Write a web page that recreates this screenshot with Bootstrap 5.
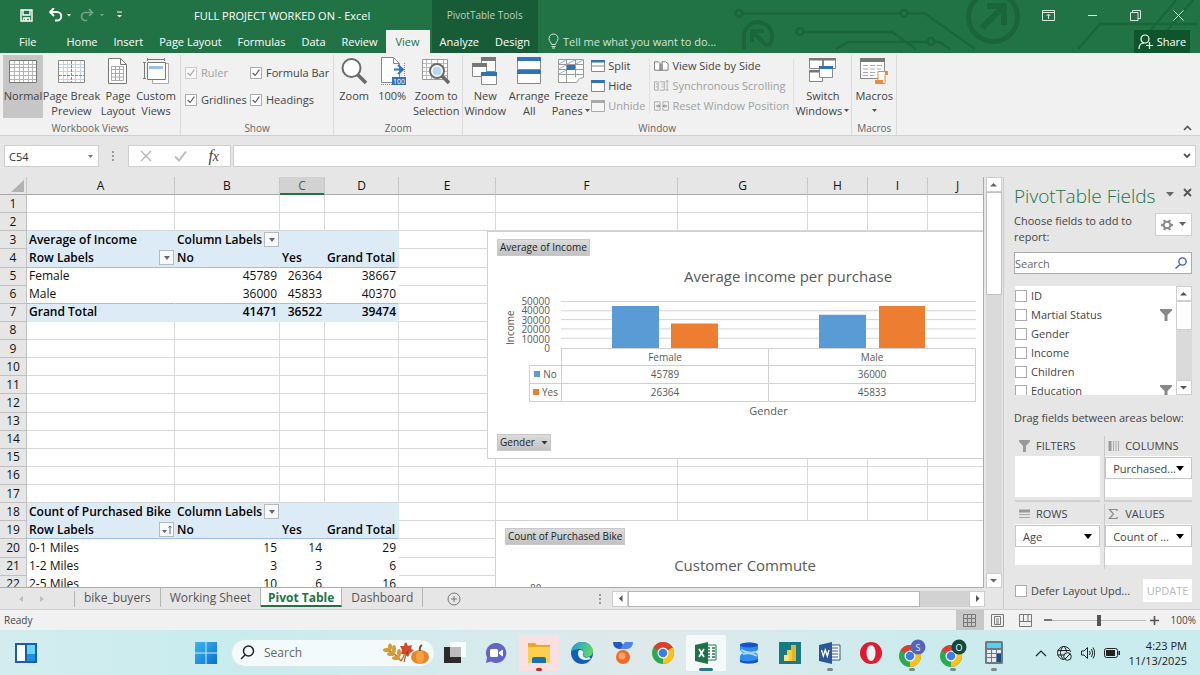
<!DOCTYPE html>
<html lang="en">
<head>
<meta charset="utf-8">
<meta name="viewport" content="width=device-width, initial-scale=1">
<title>FULL PROJECT WORKED ON - Excel</title>
<link href="https://cdn.jsdelivr.net/npm/bootstrap@5.3.0/dist/css/bootstrap.min.css" rel="stylesheet">
<style>
:root{--green:#217346;--dark:#185c37;--ink:#444;--line:#d4d4d4;--ui:"Open Sans","Noto Sans",sans-serif;--cell:"Open Sans","Noto Sans",sans-serif}
body{font-family:var(--ui);font-size:11px;line-height:15px;color:var(--ink);background:#e6e6e6;overflow:hidden}
button{font:inherit;color:inherit;background:none;border:0;padding:0}
input{font:inherit;color:inherit}
svg{display:block;flex:none}
/* title bar */
.titlebar{background:var(--green);color:#fff;height:53px}
.circuit{right:0;top:0}
.toprow{height:30px}
.filename{margin-left:71px}
.tab{display:block;padding:4px 8px 0;height:23px;color:#fff;text-decoration:none;white-space:nowrap}
.tab-file{padding:4px 22px 0 19px}
.tab.on{background:#f1f1f1;color:var(--green);padding:4px 10px 0}
.context{background:var(--dark);margin-left:2px}
.context .toprow{color:#b9d3c4;font-size:10px}
.tell{color:#d0e3d8;padding-left:10px}
.winctl{gap:32px;padding:0 16px}
.share{background:#0f552c;width:56px;height:23px;margin-right:10px}
/* ribbon */
.ribbon{background:#f1f1f1;height:83px;border-bottom:1px solid #d2d2d2}
.group{border-right:1px solid #dadada;margin:2px 0 0;display:flex;flex-direction:column}
.group-name{font-size:10px;line-height:14px;color:#666;text-align:center;margin-top:auto}
.big{width:40px;height:63px;white-space:nowrap;display:flex;flex-direction:column;align-items:center;padding-top:2px}
.big svg{margin-bottom:3px}
.big.on{background:#c6c6c6}
.big .caret{display:inline-block;margin:0 0 2px 2px}
.w-s{width:36px}.w-m{width:44px}.w-l{width:57px}
.views{padding:0 4px 0 3px}
.tick{appearance:none;width:12px;height:12px;border:1px solid #ababab;background:#fff;margin:0}
.tick:checked{background:#fff url("data:image/svg+xml,%3Csvg xmlns='http://www.w3.org/2000/svg' viewBox='0 0 12 12'%3E%3Cpath d='M2 6l3 3 5-7' fill='none' stroke='%23555' stroke-width='1.3'/%3E%3C/svg%3E") center/10px no-repeat}
.tick:disabled{opacity:.5}
.off{color:#a0a0a0}
.checks{display:grid;grid-template-columns:65px auto;row-gap:12px;padding:10px 4px 0}
.checks label{gap:4px;white-space:nowrap}
.smallcmds{display:flex;flex-direction:column;gap:5px;padding-top:3px}
.smallcmds button{display:flex;align-items:center;gap:3px;white-space:nowrap}
.midline{width:1px;background:#e0e0e0;margin:4px 4px}
/* formula bar */
.fbar{height:41px;padding:9px 4px 10px}
.box{background:#fff;border:1px solid #cfcfcf}
.namebox{width:95px}
.namebox input{width:76px;border:0;background:none;padding:0 4px;color:#333}
.fbuttons{width:103px}
.fx{font-family:"Liberation Serif",serif;font-style:italic;font-size:16px}
.fentry{margin-left:2px}
/* grid */
.work{flex:1;min-height:0}
.sheetwrap{min-width:0}
.sheetrow{min-height:0}
.sheet{flex:1;min-height:0;background:#fff;border-right:1px solid #ababab;border-bottom:1px solid #ababab}
.cells{table-layout:fixed;width:988px;height:417px;border-collapse:separate;border-spacing:0;font-family:var(--cell);font-size:12px;line-height:16px;color:#111}
.cells th,.cells td{padding:0 2px;border-right:1px solid #d9d9d9;border-bottom:1px solid #d9d9d9;white-space:nowrap;height:18px}
.cells thead th{background:#e6e6e6;border-color:#c6c6c6;border-bottom-color:#a8a8a8;text-align:center;font-weight:400;padding-top:1px}
.cells thead th.sel{background:#d2d2d2;color:var(--green);box-shadow:inset 0 -1px var(--green);border-bottom-color:var(--green)}
.cells tbody th{background:#e6e6e6;border-color:#c0c0c0;text-align:center;font-weight:400}
.cells td.pv{border-color:transparent}
.cells td.hd{background:#ddebf7;border-color:#ddebf7;font-weight:600;color:#000}
.cells td.ln{border-bottom-color:#9bc2e6}
.cells td.num{text-align:right}
.cells td.menu{padding-right:0}
.menu div{display:flex;justify-content:space-between;align-items:center;height:16px}
.drop{width:15px;height:15px;background:#f8f9fb;border:1px solid #b5b9c2;display:flex;align-items:center;justify-content:center}
.chart{background:#fff;border:1px solid #d0d0d0;font-family:var(--cell);color:#595959}
.chart-a{left:487px;top:54px;width:602px;height:228px}
.chart-b{left:495px;top:343px;width:500px;height:120px}
.fieldbtn{display:block;background:linear-gradient(#dcdcdc,#c2c2c2);border:1px solid #c8c8c8;color:#222;font-size:10px;line-height:15px;padding:0 2px;margin:7px 0 0 9px}
.chart h2{font-size:15px;line-height:20px;font-weight:400;margin:10px 0 0;text-align:center}
.plotarea{width:473px;margin:11px 0 0 15px}
.plot{height:51px}
.ytitle{writing-mode:vertical-rl;transform:rotate(180deg);font-size:10px;line-height:14px;width:14px;height:48px}
.ticks{width:33px;height:56px;font-size:10px;line-height:9px;text-align:right}
.bars{flex:1;height:47px;margin-left:11px}
.dtable{margin-left:26px;width:447px;border-collapse:collapse;font-size:10px;line-height:15px;text-align:center;table-layout:fixed}
.dtable td,.dtable th{border:1px solid #d0d0d0;padding:0;height:18px;font-weight:400}
.dtable thead td{border-width:0 1px 0 0}
.dtable thead th,.dtable thead td{height:17px}
.xtitle{padding-left:58px;line-height:18px;text-align:center}
.gbtn{margin-top:14px}
.ytop{font-size:10px;line-height:13px;padding:7px 0 0 34px}
.sq{display:inline-block;width:6px;height:6px;margin-right:3px;vertical-align:1px}
.sq-no{background:#5b9bd5}.sq-yes{background:#ed7d31}
/* scroll bars */
.vbar{width:16px;background:#dadada;margin:0 1px 0 2px}
.sbtn{background:#fff;border:1px solid #cdcdcd;display:flex;align-items:center;justify-content:center}
.vbar .sbtn{height:15px}
.vthumb{height:103px;background:#fff;border:1px solid #c0c0c0}
.fthumb{height:29px}
.tabs{height:21px;background:#e6e6e6;font-size:12px;color:#555}
.stab{padding:0 9px;height:19px;line-height:19px;color:#555;text-decoration:none;border-right:1px solid #b5b5b5;white-space:nowrap}
.stab.on{background:#fff;color:var(--green);font-weight:700;border-bottom:2px solid var(--green);padding:0 7px}
.hscroll{margin-right:18px}
.hbar{height:16px;background:#d2d2d2;width:373px}
.hbar .sbtn{width:16px}
.hthumb{width:292px;background:#fff;border:1px solid #b5b5b5}
/* field pane */
.pane{width:197px;border-left:1px solid #cbcbcb;padding:7px 8px 0 10px}
.pane h1{font-size:19px;line-height:24px;font-weight:300;color:var(--green);margin:0;white-space:nowrap}
.choose{line-height:16px;margin-top:5px}
.gear{width:37px;height:23px}
.psearch{height:22px;border:1px solid #ababab;margin-top:7px}
.psearch input{border:0;background:none;min-width:0;padding:0;flex:1}
.fields{height:109px;margin:12px 0 0 1px;background:#fff}
.fields .vbar{margin:0}
.fields .items{min-width:0;overflow:hidden}
.fields label{height:19px;gap:4px;white-space:nowrap}
.drag{margin-top:15px}
.areas{display:grid;grid-template-columns:1fr 1fr;column-gap:4px;margin:11px 0 0 1px}
.area{height:66px;border-bottom:2px solid #d0d0d0;margin-bottom:2px}
.area-last{border-bottom-color:transparent}
.area h3{font-size:11px;margin:0;font-weight:400;display:flex;align-items:center;gap:5px;padding-left:3px;height:20px}
.areabox{background:#fff;height:41px;padding-top:1px}
.areabox button{width:100%;height:22px;border:1px solid #c6c6c6;text-align:left;padding:0 7px;display:flex;align-items:center;justify-content:space-between;white-space:nowrap}
.area-r{border-left:1px solid #c9c9c9}
.defer{margin:7px 0 0 1px}
.update{background:#fff;color:#b8b8b8;width:49px;height:23px}
/* status and task bars */
.status{height:21px;background:#f1f1f1;border-top:1px solid #cfcfcf;font-size:10px}
.vbtn{width:28px;height:20px;display:flex;align-items:center;justify-content:center}
.vbtn.on{background:#c8c8c8}
.zoomer{width:94px;height:12px;appearance:none;background:linear-gradient(#bbb,#bbb) center/100% 1px no-repeat}
.zoomer::-webkit-slider-thumb{appearance:none;width:4px;height:11px;background:#555}
.taskbar{height:45px;background:linear-gradient(90deg,#d4ecef,#c8ecee 20%,#d8eaec 42%,#dfe9ea 55%,#cdebed 75%,#c9ecef)}
.widgets{margin-left:14px}
.start{margin-left:157px}
.tsearch{width:204px;height:28px;border-radius:14px;background:#f2fafb;border:1px solid #dbe6e8;margin-left:14px}
.tsearch input{border:0;background:none;width:104px;font-size:12px;padding:0 0 0 9px}
.tsearch input::placeholder,.psearch input::placeholder{color:#666;opacity:1}
.apps{width:579px}
.app{flex:1;height:40px;display:flex;align-items:center;justify-content:center;position:relative}
.app.run::after{content:"";position:absolute;bottom:2px;width:6px;height:3px;border-radius:2px;background:#7a8a8c}
.app.hot,.app.cur{border-radius:4px;background-clip:content-box;padding:2px}
.app.hot{background-color:#fbe0e2}.app.hot::after{background:#c02a26}
.app.cur{background-color:#f4fafa}.app.cur::after{width:14px;background:#2a7a8c}
.tray{gap:9px;padding-right:13px;color:#222}
</style>
</head>
<body class="d-flex flex-column vh-100">
<header class="titlebar d-flex position-relative">
  <svg class="circuit position-absolute" width="480" height="53" viewBox="720 0 480 53" fill="none" stroke="#1b653b" stroke-width="2.500">
    <circle cx="739" cy="13.500" r="3.500"/><path d="M743 13.500H901M908 13.500H925L975 49"/><circle cx="904" cy="13.500" r="3.500"/>
    <circle cx="800" cy="31.500" r="3.500"/><path d="M804 32H892L916 49M836 49l12-7H928M935 42h4l11 7"/><circle cx="931" cy="41.500" r="3.500"/>
    <path d="M1078 49l22-25H1197M1150 31l26-31M1167 31l26-31"/>
    <circle cx="993" cy="17" r="24.500" stroke-width="5"/><path d="M982 28l22-22M987 6h17v19" stroke-width="6"/>
    <path d="M744 49v-12a14 14 0 1 1 24 9" stroke-width="4"/><path d="M767 46l-14-14M752 42V31h12" stroke-width="4"/>
  </svg>
  <div>
    <div class="toprow d-flex align-items-center text-nowrap">
      <button aria-label="Save" class="ms-3"><svg class="ms-1" width="13" height="13" viewBox="0 0 13 13"><path d="M1 1h11v11H1zM3 1v5h7V1M3.500 12V9h6v3" fill="none" stroke="#fff" stroke-width="1.400"/><path d="M5 9h2v3H5z" fill="#fff"/></svg></button>
      <button aria-label="Undo" class="ms-3"><svg width="23" height="14" viewBox="0 0 23 14"><path d="M5 0L1 4l4 4M1.500 4H8a4 4 0 0 1 0 8.500H6" fill="none" stroke="#fff" stroke-width="1.900"/><path d="M18 6h4l-2 2.500z" fill="#fff"/></svg></button>
      <button aria-label="Redo" class="ms-2"><svg width="24" height="14" viewBox="0 0 24 14" opacity=".35"><path d="M9 1l3.500 3.500L9 8M12 4.500H5.500a4 4 0 0 0 0 8H7" fill="none" stroke="#fff" stroke-width="1.700"/><path d="M20 6h4l-2 2.500z" fill="#fff"/></svg></button>
      <button aria-label="Customize" class="ms-2 ps-1"><svg width="7" height="8" viewBox="0 0 7 8"><path d="M1 1h5" stroke="#fff"/><path d="M1 4h5L3.500 6.500z" fill="#fff"/></svg></button>
      <span class="filename">FULL PROJECT WORKED ON - Excel</span>
    </div>
    <nav class="d-flex">
      <a href="#" class="tab tab-file">File</a><a href="#" class="tab">Home</a><a href="#" class="tab">Insert</a><a href="#" class="tab">Page Layout</a><a href="#" class="tab">Formulas</a><a href="#" class="tab">Data</a><a href="#" class="tab">Review</a><a href="#" class="tab on">View</a>
    </nav>
  </div>
  <div class="context">
    <div class="toprow d-flex align-items-center justify-content-center">PivotTable Tools</div>
    <nav class="d-flex"><a href="#" class="tab">Analyze</a><a href="#" class="tab">Design</a></nav>
  </div>
  <div class="tell d-flex align-items-end pb-1 text-nowrap"><svg class="me-1" width="11" height="16" viewBox="0 0 11 16" fill="none" stroke="#d0e3d8"><path d="M3.500 11.500c0-2-2.500-3-2.500-6a4.500 4.500 0 0 1 9 0c0 3-2.500 4-2.500 6zM3.500 13.500h4M4 15h3"/></svg>Tell me what you want to do...</div>
  <div class="ms-auto position-relative">
    <div class="winctl toprow d-flex align-items-center">
      <button aria-label="Ribbon display"><svg width="13" height="11" viewBox="0 0 13 11" fill="none" stroke="#d8e8de"><path d="M.500.500h12v10H.500zM.500 2.500h12M6.500 9V4.500M4.500 6l2-2 2 2"/></svg></button>
      <button aria-label="Minimize"><svg width="11" height="11" viewBox="0 0 11 11"><path d="M1 5.500h9" stroke="#d8e8de"/></svg></button>
      <button aria-label="Restore"><svg width="11" height="11" viewBox="0 0 11 11" fill="none" stroke="#d8e8de"><path d="M.500 2.500h7.500v8H.500zM2.500 2.500v-2h8v8H8"/></svg></button>
      <button aria-label="Close"><svg width="11" height="11" viewBox="0 0 11 11"><path d="M.500.500l10 10M10.500.500l-10 10" stroke="#fff"/></svg></button>
    </div>
    <button class="share d-flex align-items-center justify-content-center ms-auto"><svg class="me-1" width="15" height="16" viewBox="0 0 15 16" fill="none" stroke="#fff" stroke-width="1.200"><circle cx="7" cy="5" r="4"/><path d="M1 15c0-4 2-6 5-6M8 11.500h7M11.500 8v7"/></svg>Share</button>
  </div>
</header>

<section class="ribbon d-flex">
  <div class="group">
    <div class="d-flex views">
      <button class="big on"><svg width="28" height="28" viewBox="0 0 28 28" fill="none" stroke="#b5b5b5"><path d="M.500 3.500h27v22H.500z" fill="#fff" stroke="#777"/><path d="M1 7.500h26M1 10.500h26M1 14.500h26M1 18.500h26M1 22.500h26M5.500 4v21M10.500 4v21M14.500 4v21M19.500 4v21M23.500 4v21"/></svg>Normal</button>
      <button class="big w-l"><svg width="28" height="28" viewBox="0 0 28 28" fill="none" stroke="#c3d3e6"><path d="M.500 3.500h26v22h-26z" fill="#fff" stroke="#888"/><path d="M1 7.500h25M1 10.500h25M1 14.500h25M1 22.500h25M5.500 4v21M9.500 4v21M17.500 4v21M22.500 4v21"/><path d="M13.500 4v21M1 18.500h25" stroke="#5a90c8" stroke-dasharray="3 1"/></svg>Page Break<br>Preview</button>
      <button class="big w-s"><svg width="22" height="28" viewBox="0 0 22 28" fill="none" stroke="#777"><path d="M1.500 1.500h12l6 6v19h-18z" fill="#fff"/><path d="M13.500 1.500v6h6"/><path d="M4.500 9.500h12v14h-12zM4.500 12.500h12M4.500 16.500h12M4.500 20h12M8.500 9v14M12.500 9v14" stroke="#aaa"/></svg>Page<br>Layout</button>
      <button class="big"><svg width="28" height="28" viewBox="0 0 28 28" fill="none" stroke="#777"><path d="M10.500 6.500h16v20h-16z" fill="#fff" stroke="#aaa"/><path d="M5.500 5.500h18v17h-18z" fill="#fff"/><path d="M7 9h14v3H7z" fill="#9dbfe6" stroke="none"/><path d="M5 2.500h18M5.500 1v3M22.500 1v3M2.500 5v17M1 5.500h3M1 21.500h3"/></svg>Custom<br>Views</button>
    </div>
    <div class="group-name">Workbook Views</div>
  </div>
  <div class="group">
    <div class="checks">
      <label class="d-flex align-items-center off"><input type="checkbox" class="tick" checked disabled>Ruler</label>
      <label class="d-flex align-items-center"><input type="checkbox" class="tick" checked>Formula Bar</label>
      <label class="d-flex align-items-center"><input type="checkbox" class="tick" checked>Gridlines</label>
      <label class="d-flex align-items-center"><input type="checkbox" class="tick" checked>Headings</label>
    </div>
    <div class="group-name">Show</div>
  </div>
  <div class="group">
    <div class="d-flex">
      <button class="big"><svg width="28" height="28" viewBox="0 0 28 28" fill="none"><path d="M17 17l9 9" stroke="#6a6a6a" stroke-width="3.500"/><circle cx="11.500" cy="11" r="9" fill="#fff" stroke="#6a6a6a" stroke-width="2"/></svg>Zoom</button>
      <button class="big w-s"><svg width="28" height="28" viewBox="0 0 28 28" fill="none" stroke="#888"><path d="M3.500.500h12l6 6v19h-18z" fill="#fff"/><path d="M15.500.500v6h6"/><path d="M3 27.500h24M26.500 6v20" stroke-dasharray="1 1"/><path d="M16 12.500h8M20 8l5 4.500L20 17" stroke="#2e75b6" stroke-width="2"/><path d="M14 20h14v8H14z" fill="#2e75b6" stroke="none"/><text x="15" y="27" font-size="7" fill="#fff" stroke="none">100</text></svg>100%</button>
      <button class="big w-m mx-1"><svg width="28" height="28" viewBox="0 0 28 28" fill="none" stroke="#bbb"><path d="M.500 2.500h25v20H.500z" fill="#fff" stroke="#999"/><path d="M1 6.500h24M1 10.500h24M1 14.500h24M1 18.500h24M4.500 3v19M9.500 3v19M15.500 3v19M21.500 3v19"/><path d="M20 19l7 7" stroke="#6a6a6a" stroke-width="3.500"/><circle cx="15" cy="14" r="7" fill="#fff" stroke="#6a6a6a" stroke-width="2"/><circle cx="15" cy="14" r="4.500" fill="#bcd6ef" stroke="none"/></svg>Zoom to<br>Selection</button>
    </div>
    <div class="group-name">Zoom</div>
  </div>
  <div class="group">
    <div class="d-flex">
      <button class="big w-m"><svg width="28" height="28" viewBox="0 0 28 28" fill="#fff" stroke="#888"><path d="M10.500.500h14v14h-14z"/><path d="M10 0h15v4H10z" fill="#777" stroke="none"/><path d="M1.500 6.500h14v13h-14z"/><path d="M1 6h15v4H1z" fill="#777" stroke="none"/><path d="M10.500 15.500h15v12h-15z"/><path d="M10 15h16v4H10z" fill="#2e75b6" stroke="none"/></svg>New<br>Window</button>
      <button class="big w-m"><svg width="24" height="28" viewBox="0 0 24 28" fill="#fff" stroke="#888"><path d="M.500.500h23v12H.500zM.500 14.500h23v12H.500z"/><path d="M0 0h24v4H0zM0 13h24v4H0z" fill="#2e75b6" stroke="none"/></svg>Arrange<br>All</button>
      <button class="big"><svg width="28" height="28" viewBox="0 0 28 28" fill="none" stroke="#999"><path d="M1.500 2.500h25v18l-4 1-3 4H1.500z" fill="#fff"/><path d="M1.500 7.500h25M1.500 12.500h25M1.500 17.500h25M9.500 2.500v23M18.500 2.500v18"/><path d="M2 7l7-4M2 12l7-4M2 17l7-4M10 7l8-4M19 7l7-4" stroke="#8cb4de"/><path d="M10 8h8v5h-8z" fill="#2e75b6" stroke="none"/></svg>Freeze<br><span>Panes<svg class="caret" width="6" height="4" viewBox="0 0 6 4"><path d="M0 0h5L2.500 3z" fill="#555"/></svg></span></button>
      <div class="smallcmds">
        <button><svg width="14" height="12" viewBox="0 0 14 12"><path d="M.500.500h13v11H.500zM.500 6h13" fill="#fff" stroke="#888"/><path d="M0 0h14v2.500H0z" fill="#2e75b6"/></svg>Split</button>
        <button><svg width="14" height="12" viewBox="0 0 14 12"><path d="M.500.500h13v11H.500z" fill="#fff" stroke="#888"/><path d="M0 0h14v3H0z" fill="#2e75b6"/></svg>Hide</button>
        <button class="off"><svg width="14" height="12" viewBox="0 0 14 12"><path d="M.500.500h13v11H.500z" fill="#f5f5f5" stroke="#aaa"/><path d="M0 0h14v3H0z" fill="#aaa"/></svg>Unhide</button>
      </div>
      <div class="midline"></div>
      <div class="smallcmds">
        <button><svg width="15" height="12" viewBox="0 0 16 12" fill="#fff" stroke="#777"><path d="M.500 1.500h4l2 2v7h-6zM6.500 3.500v7h2v-7M8.500 1.500h4l2.500 2v7H8.500z"/></svg>View Side by Side</button>
        <button class="off"><svg width="15" height="13" viewBox="0 0 16 13" fill="none" stroke="#aaa"><path d="M.500 2.500h4v9h-4zM6 2.500h5v9H6M2 5h2M2 8h2M8 5h2M8 8h2M14 1v11M12.500 2.500L14 1l1.500 1.500M12.500 10.500L14 12l1.500-1.500"/></svg>Synchronous Scrolling</button>
        <button class="off"><svg width="15" height="12" viewBox="0 0 16 12" fill="none" stroke="#aaa"><path d="M.500 1.500h6v9h-6zM9.500 1.500h6v9h-6z"/><path d="M2 6h4M4.500 4.500L6 6 4.500 7.500M14 6h-4M11.500 4.500L10 6l1.500 1.500" stroke="#777"/></svg>Reset Window Position</button>
      </div>
      <div class="midline me-0"></div>
      <button class="big w-l"><svg width="28" height="28" viewBox="0 0 28 28" fill="#fff" stroke="#888"><path d="M.500 1.500h13v10H.500zM14.500 1.500h12v10h-12zM.500 13.500h13v11H.500z"/><path d="M0 1h27v2.500H0zM0 13h12v2.500H0z" fill="#777" stroke="none"/><path d="M10.500 9.500h13v11h-13z"/><path d="M10 9h14v3H10z" fill="#2e75b6" stroke="none"/></svg>Switch<br><span>Windows<svg class="caret" width="6" height="4" viewBox="0 0 6 4"><path d="M0 0h5L2.500 3z" fill="#555"/></svg></span></button>
    </div>
    <div class="group-name">Window</div>
  </div>
  <div class="group">
    <button class="big mx-auto w-m"><svg width="30" height="28" viewBox="0 0 30 28" fill="#fff" stroke="#888"><path d="M1.500 1.500h24v20h-24z"/><path d="M1 1h25v4H1z" fill="#777" stroke="none"/><path d="M4 8.500h5M11 8.500h5M18 8.500h5M4 12h5M11 12h5M18 12h4M4 15.500h5M11 15.500h5M4 18.500h5M11 18.500h4" stroke="#aaa"/><path d="M19 14.500h9v3h-2v9H17v-3h2z" stroke="#ed8b3a"/><path d="M16 23h8v4h-8zM26 14h3v4h-3z" fill="#ed8b3a" stroke="none"/></svg>Macros<span><svg class="caret" width="6" height="4" viewBox="0 0 6 4"><path d="M0 0h5L2.500 3z" fill="#555"/></svg></span></button>
    <div class="group-name">Macros</div>
  </div>
  <button class="ms-auto align-self-end p-1 me-1" aria-label="Collapse ribbon"><svg width="9" height="6" viewBox="0 0 9 6"><path d="M1 5l3.500-3.500L8 5" fill="none" stroke="#555" stroke-width="1.600"/></svg></button>
</section>

<section class="fbar d-flex">
  <div class="box namebox d-flex align-items-center"><input aria-label="Name box" value="C54"><button aria-label="Names"><svg width="16" height="5" viewBox="0 0 16 5"><path d="M7 1h5L9.500 4z" fill="#777"/></svg></button></div>
  <svg class="mx-2" width="13" height="22" viewBox="0 0 13 22" fill="#999"><path d="M5 6h2v2H5zM5 10h2v2H5zM5 14h2v2H5z"/></svg>
  <div class="box fbuttons d-flex align-items-center justify-content-around">
    <button aria-label="Cancel"><svg width="12" height="12" viewBox="0 0 12 12"><path d="M1 1l10 10M11 1L1 11" stroke="#b5b5b5" stroke-width="1.400"/></svg></button>
    <button aria-label="Enter"><svg width="13" height="12" viewBox="0 0 13 12"><path d="M1 6.500l4 4 7-9" fill="none" stroke="#bbb" stroke-width="2"/></svg></button>
    <button aria-label="Insert function" class="fx">f<small>x</small></button>
  </div>
  <div class="box fentry flex-fill d-flex align-items-center"><input aria-label="Formula" class="border-0 flex-fill bg-transparent"><button aria-label="Expand" class="me-1"><svg width="8" height="6" viewBox="0 0 8 6"><path d="M1 1l3 3 3-3" fill="none" stroke="#555" stroke-width="1.800"/></svg></button></div>
</section>

<main class="work d-flex">
  <div class="sheetwrap flex-fill d-flex flex-column">
    <div class="sheetrow d-flex flex-fill">
      <div class="sheet position-relative overflow-hidden">
        <table class="cells">
          <colgroup><col style="width:27px"><col style="width:148px"><col style="width:105px"><col style="width:45px"><col style="width:74px"><col style="width:97px"><col style="width:182px"><col style="width:130px"><col style="width:60px"><col style="width:60px"><col style="width:60px"></colgroup>
          <thead><tr><th><svg class="ms-auto" width="13" height="13" viewBox="0 0 13 13"><path d="M13 0v12H0z" fill="#b2b2b2"/></svg></th><th>A</th><th>B</th><th class="sel">C</th><th>D</th><th>E</th><th>F</th><th>G</th><th>H</th><th>I</th><th>J</th></tr></thead>
          <tbody id="rows"></tbody>
        </table>
        <section class="chart chart-a position-absolute">
          <button class="fieldbtn">Average of Income</button>
          <h2>Average income per purchase</h2>
          <div class="plotarea">
            <div class="plot d-flex">
              <div class="ytitle text-nowrap">Income</div>
              <div class="ticks d-flex flex-column justify-content-between"><span>50000</span><span>40000</span><span>30000</span><span>20000</span><span>10000</span><span>0</span></div>
              <svg class="bars mt-1" viewBox="0 0 415 48" preserveAspectRatio="none"><path d="M0 .500h415M0 10h415M0 19h415M0 28.500h415M0 38h415" stroke="#d4d4d4"/><path d="M51 5h47v43H51zM258 14h47v34h-47z" fill="#5b9bd5"/><path d="M110 23h47v25h-47zM318 5h46v43h-46z" fill="#ed7d31"/></svg>
            </div>
            <table class="dtable">
              <colgroup><col style="width:32px"><col><col></colgroup>
              <thead><tr><td></td><th>Female</th><th>Male</th></tr></thead>
              <tbody><tr><th><i class="sq sq-no"></i>No</th><td>45789</td><td>36000</td></tr>
              <tr><th><i class="sq sq-yes"></i>Yes</th><td>26364</td><td>45833</td></tr></tbody>
            </table>
            <div class="xtitle">Gender</div>
          </div>
          <button class="fieldbtn gbtn">Gender <svg class="d-inline ms-1" width="7" height="5" viewBox="0 0 7 5"><path d="M.500 0h6l-3 3.500z" fill="#333"/></svg></button>
        </section>
        <section class="chart chart-b position-absolute">
          <button class="fieldbtn">Count of Purchased Bike</button>
          <h2>Customer Commute</h2>
          <div class="ytop">80</div>
        </section>
      </div>
      <div class="vbar d-flex flex-column">
        <button class="sbtn" aria-label="Scroll up"><svg width="8" height="5" viewBox="0 0 8 5"><path d="M0 4.500h7L3.500 1z" fill="#666"/></svg></button>
        <div class="vthumb"></div>
        <button class="sbtn mt-auto" aria-label="Scroll down"><svg width="8" height="5" viewBox="0 0 8 5"><path d="M0 1h7L3.500 4.500z" fill="#666"/></svg></button>
      </div>
    </div>
    <div class="tabs d-flex">
      <div class="d-flex align-items-center"><svg width="75" height="16" viewBox="0 0 75 16"><path d="M23 5v6l-4-3zM40 5v6l4-3z" fill="#bdbdbd"/><path d="M74.500 0v16" stroke="#b5b5b5"/></svg></div>
      <a href="#" class="stab">bike_buyers</a><a href="#" class="stab">Working Sheet</a><a href="#" class="stab on">Pivot Table</a><a href="#" class="stab">Dashboard</a>
      <button class="ms-4" aria-label="New sheet"><svg width="14" height="14" viewBox="0 0 14 14" fill="none" stroke="#777"><circle cx="7" cy="7" r="6"/><path d="M4 7h6M7 4v6"/></svg></button>
      <div class="hscroll ms-auto d-flex align-items-center"><svg width="14" height="14" viewBox="0 0 14 14" fill="#999"><path d="M1 2h2v2H1zM1 6h2v2H1zM1 10h2v2H1z"/></svg>
      <div class="hbar d-flex"><button class="sbtn" aria-label="Scroll left"><svg width="5" height="8" viewBox="0 0 5 8"><path d="M4.500 0v7L1 3.500z" fill="#555"/></svg></button><div class="hthumb"></div><button class="sbtn ms-auto" aria-label="Scroll right"><svg width="5" height="8" viewBox="0 0 5 8"><path d="M1 0v7l3.500-3.500z" fill="#555"/></svg></button></div></div>
    </div>
  </div>
  <aside class="pane flex-shrink-0">
    <div class="d-flex"><h1>PivotTable Fields</h1><button class="ms-auto align-self-start pt-1" aria-label="Pane options"><svg class="mt-1" width="9" height="5" viewBox="0 0 9 5"><path d="M0 0h8L4 4.500z" fill="#666"/></svg></button><button class="align-self-start pt-1 ms-2" aria-label="Close pane"><svg width="9" height="9" viewBox="0 0 9 9"><path d="M1 1l7 7M8 1L1 8" stroke="#555" stroke-width="1.800"/></svg></button></div>
    <div class="d-flex justify-content-between choose"><span>Choose fields to add to<br>report:</span><button class="box gear d-flex align-items-center justify-content-center" aria-label="Tools"><svg class="me-1" width="14" height="14" viewBox="0 0 14 14" fill="none" stroke="#8c8c8c"><path d="M1 7h2M11 7h2M4 2l1.200 2M10 2L8.800 4M4 12l1.200-2M10 12l-1.200-2" stroke-width="2.400"/><circle cx="7" cy="7" r="3.300" stroke-width="2"/></svg><svg width="9" height="5" viewBox="0 0 9 5"><path d="M1 0h7L4.500 4z" fill="#666"/></svg></button></div>
    <div class="psearch bg-white d-flex align-items-center"><input aria-label="Search fields" placeholder="Search"><svg class="me-1" width="12" height="12" viewBox="0 0 12 12" fill="none" stroke="#2f62a8" stroke-width="1.300"><circle cx="7.500" cy="4.500" r="3.700"/><path d="M5 7.500L.500 11.500"/></svg></div>
    <div class="fields d-flex">
      <div class="items flex-fill" id="fields"></div>
      <div class="vbar d-flex flex-column"><button class="sbtn" aria-label="Up"><svg width="8" height="5" viewBox="0 0 8 5"><path d="M0 4.500h7L3.500 1z" fill="#555"/></svg></button><div class="box fthumb"></div><button class="sbtn mt-auto" aria-label="Down"><svg width="8" height="5" viewBox="0 0 8 5"><path d="M0 1h7L3.500 4.500z" fill="#555"/></svg></button></div>
    </div>
    <div class="drag text-nowrap">Drag fields between areas below:</div>
    <div class="areas">
      <div class="area"><h3><svg width="13" height="12" viewBox="0 0 13 12"><path d="M1 0h11v1.500L8 6v6H5V6L1 1.500z" fill="#999"/></svg>FILTERS</h3><div class="areabox"></div></div>
      <div class="area area-r"><h3><svg width="12" height="12" viewBox="0 0 12 12" stroke="#999"><path d="M2 1v10" stroke-width="3"/><path d="M5.500 1v10M8 1v10M10.500 1v10" stroke="#aaa"/></svg>COLUMNS</h3><div class="areabox"><button>Purchased...<svg width="8" height="5" viewBox="0 0 8 5"><path d="M0 0h8L4 5z"/></svg></button></div></div>
      <div class="area area-last"><h3><svg width="13" height="12" viewBox="0 0 13 12" stroke="#999"><path d="M1 3h11" stroke-width="3"/><path d="M1 6.500h11M1 9.500h11" stroke="#aaa"/></svg>ROWS</h3><div class="areabox"><button>Age<svg width="8" height="5" viewBox="0 0 8 5"><path d="M0 0h8L4 5z"/></svg></button></div></div>
      <div class="area area-r area-last"><h3><svg width="12" height="12" viewBox="0 0 12 12"><path d="M9 3V1.500H1.500L5.500 6l-4 4.500H9V9" fill="none" stroke="#888" stroke-width="1.200"/></svg>VALUES</h3><div class="areabox"><button>Count of ...<svg width="8" height="5" viewBox="0 0 8 5"><path d="M0 0h8L4 5z"/></svg></button></div></div>
    </div>
    <div class="d-flex align-items-center defer text-nowrap"><label class="d-flex align-items-center"><input type="checkbox" class="tick me-1">Defer Layout Upd...</label><button class="update ms-auto">UPDATE</button></div>
  </aside>
</main>

<footer class="status d-flex align-items-center">
  <span class="ps-1">Ready</span>
  <button class="vbtn on ms-auto" aria-label="Normal view"><svg width="13" height="13" viewBox="0 0 13 13"><path d="M.500.500h12v12H.500zM4.500 0v13M8.500 0v13M0 4.500h13M0 8.500h13" fill="none" stroke="#777"/></svg></button>
  <button class="vbtn" aria-label="Page layout view"><svg width="13" height="13" viewBox="0 0 13 13"><path d="M.500.500h12v12H.500zM3.500 2.500h6v8h-6zM5 5h3M5 7h3M5 9h3" fill="none" stroke="#777"/></svg></button>
  <button class="vbtn" aria-label="Page break view"><svg width="13" height="13" viewBox="0 0 13 13"><path d="M.500.500h12v12H.500zM4.500 0v7.500h4.500V0M.500 7.500h12" fill="none" stroke="#777"/></svg></button>
  <button aria-label="Zoom out" class="ps-1"><svg width="8" height="8" viewBox="0 0 8 8"><path d="M0 4h8" stroke="#555" stroke-width="1.600"/></svg></button>
  <input type="range" class="zoomer" aria-label="Zoom">
  <button aria-label="Zoom in" class="px-1"><svg width="9" height="9" viewBox="0 0 9 9"><path d="M0 4.500h9M4.500 0v9" stroke="#555" stroke-width="1.600"/></svg></button>
  <span class="ps-2 pe-1">100%</span>
</footer>

<footer class="taskbar d-flex align-items-center">
  <button aria-label="Widgets" class="widgets"><svg width="24" height="22" viewBox="0 0 24 22"><path d="M1 1h22v20H1z" fill="#1560ab"/><path d="M3 3h8v16H3z" fill="#fff"/><path d="M13 3h8v9h-8z" fill="#6cd3fb"/><path d="M13 12h8v7h-8z" fill="#1d8ee0"/></svg></button>
  <button aria-label="Start" class="start"><svg width="22" height="22" viewBox="0 0 22 22"><defs><linearGradient id="wn" x2="1" y2="1"><stop stop-color="#3cb8f0"/><stop offset="1" stop-color="#0a6fd0"/></linearGradient></defs><path d="M0 0h10.500v10.500H0zM11.500 0H22v10.500H11.500zM0 11.500h10.500V22H0zM11.500 11.500H22V22H11.500z" fill="url(#wn)"/></svg></button>
  <div class="tsearch d-flex align-items-center"><svg class="ms-2" width="15" height="15" viewBox="0 0 15 15" fill="none" stroke="#222" stroke-width="1.500"><circle cx="8.500" cy="6" r="5"/><path d="M5 10l-4 4"/></svg><input aria-label="Search" placeholder="Search">
    <svg class="ms-auto me-1" width="48" height="24" viewBox="0 0 48 24"><path d="M2 9q9 0 17 11M19 20q6-8 4-18" fill="none" stroke="#b67a25" stroke-width="1.500"/><g fill="#d79a36"><ellipse cx="5" cy="9" rx="4" ry="2"/><ellipse cx="8" cy="6" rx="2" ry="3.500"/><ellipse cx="12" cy="8" rx="2" ry="4"/><ellipse cx="9" cy="13" rx="4" ry="2"/><ellipse cx="14" cy="17" rx="4" ry="2"/><ellipse cx="17" cy="12" rx="2" ry="4"/></g><path d="M24 1l2 4 4-1-1 4 3 1-4 3-2 4-3-3-4 0 1-4-2-4 4 0z" fill="#d9472b"/><path d="M22 21q1-6 4-11" stroke="#8c3a1c" fill="none"/><ellipse cx="38" cy="16" rx="9" ry="7" fill="#e8842a"/><ellipse cx="38" cy="16" rx="4" ry="7" fill="#f6a03f"/><path d="M38 10q-1-4 2-6" stroke="#6a5a2a" stroke-width="2" fill="none"/></svg>
  </div>
  <div class="apps d-flex align-items-center">
    <button class="app" aria-label="Task view"><svg width="22" height="22" viewBox="0 0 22 22"><path d="M0 5h17v16H0z" fill="#2b2b2b"/><path d="M6 0h16v15H6z" fill="#fff" opacity=".85"/><path d="M6 5h11v10H6z" fill="#bbb"/></svg></button>
    <button class="app" aria-label="Chat"><svg width="22" height="22" viewBox="0 0 22 22"><path d="M11 1a10 10 0 1 1-5 18.500L1 21l1-5.500A10 10 0 0 1 11 1z" fill="#6264c8"/><rect x="5" y="7" width="8" height="8" rx="1.500" fill="#fff"/><path d="M14 10l4-2.500v7L14 12z" fill="#fff"/></svg></button>
    <button class="app run hot" aria-label="File Explorer"><svg width="24" height="22" viewBox="0 0 24 22"><path d="M1 1h7l2 2h13v18H1z" fill="#e8a921"/><path d="M1 5h22v16H1z" fill="#fbd04f"/><path d="M5 21v-4q0-2 2-2h10q2 0 2 2v4z" fill="#1672bd"/></svg></button>
    <button class="app" aria-label="Edge"><svg width="24" height="24" viewBox="0 0 24 24"><defs><linearGradient id="ed" x2="1" y2=".3"><stop stop-color="#1b9de2"/><stop offset="1" stop-color="#5fd36b"/></linearGradient></defs><circle cx="12" cy="12" r="11" fill="#1060b5"/><path d="M1 11C2 4 8 1 12 1c7 0 11 5 11 9 0 3-2 6-6 6-3 0-4-1-4-2 1-1 1-5-3-6-4 0-8 1-9 3z" fill="url(#ed)"/><path d="M9 9c-3 5 1 13 12 9l-2-2c-4 2-7-1-6-3 1-2 0-4-4-4z" fill="#e9f3f4"/></svg></button>
    <button class="app" aria-label="Medal"><svg width="22" height="24" viewBox="0 0 22 24"><path d="M1 1h8l5 7H7Q1 7 1 1z" fill="#2457c5"/><path d="M21 1h-8L8 8h7q6-1 6-7z" fill="#4a86ee"/><circle cx="11" cy="16" r="7" fill="#ee6a26"/><circle cx="10" cy="15" r="3.500" fill="#ffa460"/></svg></button>
    <button class="app" aria-label="Chrome"><svg width="24" height="24" viewBox="0 0 24 24"><use href="#chrome"/></svg></button>
    <button class="app run cur" aria-label="Excel"><svg width="22" height="22" viewBox="0 0 22 22"><path d="M10 3h11v15H10z" fill="#fff" stroke="#1f7246"/><path d="M13 6h2M17 6h3M13 9h2M17 9h3M13 12h2M17 12h3M13 15h2M17 15h3" stroke="#1f7246" stroke-width="1.500"/><path d="M0 3l13-3v22L0 19z" fill="#1f7246"/><path d="M4 7l5 8M9 7l-5 8" stroke="#fff" stroke-width="1.700"/></svg></button>
    <button class="app" aria-label="Database"><svg width="22" height="24" viewBox="0 0 22 24"><path d="M2 3q9-3 18 0v5q0 2-4 3 4 1 4 4v6q-9 3-18 0v-5q0-3 4-4-4-1-4-4z" fill="#2f8df0"/><ellipse cx="11" cy="4" rx="9" ry="2.500" fill="#1a52c9"/><path d="M3 9q8 4 14 2M5 13q8-2 14 2" stroke="#a5d5fc" stroke-width="2" fill="none"/><path d="M2 19q9 3 18-1v3q-9 3-18 0z" fill="#1a52c9"/></svg></button>
    <button class="app" aria-label="Power BI"><svg width="22" height="22" viewBox="0 0 22 22"><path d="M0 0h22v22H0z" fill="#167a84"/><path d="M12 3h5v16h-5z" fill="#e8b41e"/><path d="M8 8h5v11H8z" fill="#f4cd3c"/><path d="M5 13h5v6H5z" fill="#fbe27a"/></svg></button>
    <button class="app run" aria-label="Word"><svg width="22" height="22" viewBox="0 0 22 22"><path d="M10 3h11v15H10z" fill="#fff" stroke="#2b579a"/><path d="M13 6h6M13 9h6M13 12h6M13 15h6" stroke="#2b579a"/><path d="M0 3l13-3v22L0 19z" fill="#2b579a"/><path d="M2.500 8l1.800 6 2-6 2 6L10 8" fill="none" stroke="#fff" stroke-width="1.400"/></svg></button>
    <button class="app" aria-label="Opera"><svg width="22" height="22" viewBox="0 0 22 22"><ellipse cx="11" cy="11" rx="11" ry="11" fill="#e3182d"/><ellipse cx="11" cy="11" rx="4.500" ry="8" fill="#e6f4f5"/></svg></button>
    <button class="app run" aria-label="Chrome profile S"><svg width="28" height="28" viewBox="0 0 28 28"><g transform="translate(0 5)"><g id="chrome"><circle cx="12" cy="12" r="11" fill="#2da94f"/><path d="M12 12L2.500 6.500A11 11 0 0 1 21.500 6.500z" fill="#e33b2e"/><path d="M12 12l9.500-5.500A11 11 0 0 1 12 23z" fill="#fbc116"/><path d="M12 7h9.800l-1-2H7z" fill="#e33b2e"/><circle cx="12" cy="12" r="5.500" fill="#fff"/><circle cx="12" cy="12" r="4.300" fill="#3b7ded"/></g></g><circle cx="20" cy="8" r="7.500" fill="#5563b8"/><text x="20" y="11.500" text-anchor="middle" font-size="9" fill="#dfe3ff">S</text></svg></button>
    <button class="app run" aria-label="Chrome profile O"><svg width="28" height="28" viewBox="0 0 28 28"><use href="#chrome" transform="translate(0 5)"/><circle cx="20" cy="8" r="7.500" fill="#0c4b3e"/><text x="20" y="11.500" text-anchor="middle" font-size="9" fill="#fff">O</text></svg></button>
    <button class="app run" aria-label="Calculator"><svg width="18" height="24" viewBox="0 0 18 24"><rect width="18" height="23" rx="1.500" fill="#6e7a82"/><path d="M2 2h14v5H2z" fill="#4fd3f0"/><path d="M2 9h4v3H2zM7 9h4v3H7zM12 9h4v3h-4zM2 13h4v3H2zM7 13h4v3H7zM2 17h4v4H2zM7 17h4v4H7z" fill="#e5eaee"/><path d="M12 13h4v8h-4z" fill="#124e8c"/></svg></button>
  </div>
  <div class="tray d-flex align-items-center ms-auto">
    <svg width="12" height="8" viewBox="0 0 12 8"><path d="M1 7l5-5 5 5" fill="none" stroke="#222" stroke-width="1.200"/></svg>
    <svg width="16" height="16" viewBox="0 0 16 16" fill="none" stroke="#222"><path d="M8 14.500A6.500 6.500 0 1 1 14.500 7M1.500 5.500h12M1.500 10H8M7.500 1c-4 4-4 9 0 13.500M7.500 1c2 2 3 4 3 6"/><circle cx="11.500" cy="11.500" r="3.800"/><path d="M9 14l5-5"/></svg>
    <svg width="14" height="14" viewBox="0 0 14 14" fill="none" stroke="#222"><path d="M.500 5h2.500l3.500-3.500v11L3 9H.500zM8.500 5q1.500 2 0 4M10.500 3q2.500 4 0 8M12 1.500q3.500 5.500 0 11"/></svg>
    <svg width="16" height="10" viewBox="0 0 16 10"><rect x=".500" y=".500" width="13" height="9" rx="2" fill="none" stroke="#222"/><path d="M2 2h9v6H2zM14.500 3H16v4h-1.500z" fill="#222"/></svg>
    <div class="clock text-end">4:23 PM<br>11/13/2025</div>
  </div>
</footer>
<script>
const funnel='<svg class="ms-auto me-1" width="12" height="12" viewBox="0 0 12 12"><path d="M0 0h12v1.500L7.500 6v6h-3V6L0 1.500z" fill="#888"/></svg>';
const drop='<button class="drop" aria-label="Filter"><svg width="6" height="4" viewBox="0 0 6 4"><path d="M0 0h6L3 4z" fill="#667"/></svg></button>';
const sort='<button class="drop" aria-label="Sort and filter"><svg width="12" height="10" viewBox="0 0 12 10"><path d="M1 5h5L3.500 8z" fill="#667"/><path d="M9 9V1M7.500 2.500L9 1l1.500 1.500" stroke="#667" fill="none"/></svg></button>';
const menu=(text,btn)=>'<div>'+text+btn+'</div>';
const data={3:['Average of Income',menu('Column Labels',drop),'',''],4:[menu('Row Labels',drop),'No','Yes','Grand Total'],5:['Female','45789','26364','38667'],6:['Male','36000','45833','40370'],7:['Grand Total','41471','36522','39474'],18:['Count of Purchased Bike',menu('Column Labels',drop),'',''],19:[menu('Row Labels',sort),'No','Yes','Grand Total'],20:['0-1 Miles','15','14','29'],21:['1-2 Miles','3','3','6'],22:['2-5 Miles','10','6','16']};
const head=[3,4,7,18,19],lined=[4,6,19];
let html='';
for(let r=1;r<=22;r++){
  html+='<tr><th scope="row">'+r+'</th>';
  for(let c=0;c<10;c++){
    const d=data[r]&&c<4, v=d?data[r][c]:'';
    const cls=d?'pv'+(head.includes(r)?' hd':'')+(lined.includes(r)?' ln':'')+(/^\d+$/.test(v)?' num':'')+(v[0]==='<'?' menu':''):'';
    html+='<td class="'+cls+'">'+v+'</td>';
  }
  html+='</tr>';
}
document.getElementById('rows').innerHTML=html;
document.getElementById('fields').innerHTML=[['ID'],['Martial Status',1],['Gender'],['Income'],['Children'],['Education',1]].map(f=>'<label class="d-flex align-items-center"><input type="checkbox" class="tick">'+f[0]+(f[1]?funnel:'')+'</label>').join('');
</script>
<script src="https://cdn.jsdelivr.net/npm/bootstrap@5.3.0/dist/js/bootstrap.bundle.min.js"></script>
</body>
</html>
